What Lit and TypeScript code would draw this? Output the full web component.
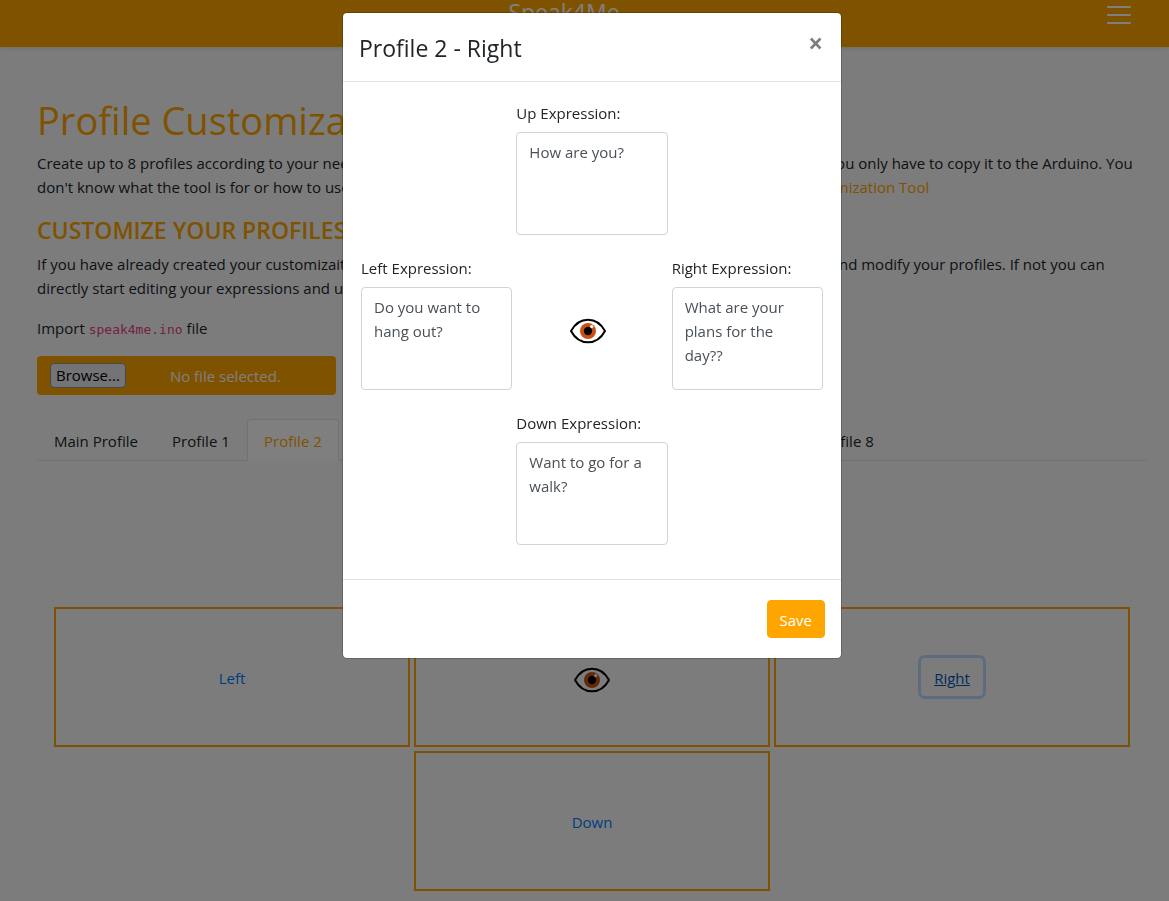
import { LitElement, html, css, svg } from "lit";
import { customElement, property, state, query } from "lit/decorators.js";
import { classMap } from "lit/directives/class-map.js";

type Direction = "Up" | "Left" | "Right" | "Down";

@customElement("eye-icon")
export class EyeIcon extends LitElement {
  static styles = css`
    :host {
      display: block;
      width: 36px;
      height: 26px;
    }
    svg {
      display: block;
    }
  `;

  render() {
    return html`<svg width="36" height="26" viewBox="0 0 36 26" aria-hidden="true">
      ${svg`
        <path d="M1 13C4.500 6.500 10.500 1.700 18 1.700S31.500 6.500 35 13C31.500 19.500 25.500 24.300 18 24.300S4.500 19.500 1 13Z"
          fill="none" stroke="#000" stroke-width="2" stroke-linejoin="round" />
        <circle cx="18" cy="13" r="8" fill="#ca5010" />
        <circle cx="18" cy="13" r="4.200" fill="#000" />
        <circle cx="21.700" cy="8.600" r="1.600" fill="#fff" />`}
    </svg>`;
  }
}

@customElement("expression-field")
export class ExpressionField extends LitElement {
  @property() label = "";
  @property() value = "";

  static styles = css`
    :host {
      display: block;
    }
    .caption {
      display: block;
      margin-bottom: 7px;
      line-height: 24px;
      color: #212529;
      white-space: nowrap;
    }
    .box {
      display: block;
      box-sizing: border-box;
      width: 100%;
      height: 103px;
      margin: 0;
      padding: 7px 12px 5px;
      border: 1px solid #ced4da;
      border-radius: 4px;
      background: #fff;
      color: #495057;
      font: inherit;
      line-height: 24px;
      resize: none;
    }
  `;

  render() {
    return html`
      <label class="caption" for="box">${this.label}</label>
      <textarea class="box" id="box" .value=${this.value}></textarea>
    `;
  }
}

@customElement("app-root")
export class AppRoot extends LitElement {
  @state() private tab = 2;
  @state() private editing: Direction | null = "Right";
  @query("#import") private fileInput!: HTMLInputElement;

  private tabs = ["Main Profile", ...Array.from({ length: 8 }, (_, i) => `Profile ${i + 1}`)];

  private expressions: Record<Direction, string> = {
    Up: "How are you?",
    Left: "Do you want to hang out?",
    Right: "What are your plans for the day??",
    Down: "Want to go for a walk?",
  };

  static styles = css`
    :host {
      display: block;
      min-height: 100vh;
      background: #f9f9f9;
      color: #212529;
      font-family: "Open Sans", "Noto Sans", sans-serif;
      font-size: 15px;
      line-height: 24px;
    }
    .navbar {
      display: flex;
      align-items: flex-start;
      padding: 0 22px 17px 37px;
      background: #ffa500;
      box-shadow: 0 2px 4px rgba(0, 0, 0, 0.1);
    }
    .brand {
      flex: 1;
      text-align: center;
      font-size: 23px;
      color: #fff;
      text-decoration: none;
    }
    .toggler {
      padding: 0 12px;
      border: 1px solid transparent;
      border-width: 0 1px;
      background: none;
      line-height: 0;
    }
    .content {
      padding: 49px 22px 10px 37px;
    }
    h1,
    h2,
    p {
      margin: 0;
    }
    h1 {
      margin-bottom: 7px;
      font-size: 38px;
      font-weight: 400;
      line-height: 48px;
      color: #ffa500;
    }
    h2 {
      margin-bottom: 7px;
      font-size: 23px;
      font-weight: 600;
      line-height: 30px;
      color: #ffa500;
      text-transform: uppercase;
    }
    .text {
      margin-bottom: 16px;
    }
    .text.last {
      margin-bottom: 14px;
    }
    .text a {
      color: #ffa500;
      text-decoration: none;
    }
    code {
      font-family: "DejaVu Sans Mono", monospace;
      font-size: 13px;
      color: #e83e8c;
    }
    .file {
      display: flex;
      align-items: center;
      gap: 44px;
      box-sizing: border-box;
      width: 299px;
      height: 39px;
      margin-bottom: 24px;
      padding: 0 13px;
      border-radius: 4px;
      background: #ffa500;
      color: #fff;
    }
    .browse {
      padding: 0 5px;
      border: 1px solid #8f8f9d;
      border-radius: 4px;
      background: #e9e9ed;
      color: #000;
      font: inherit;
      line-height: 23px;
    }
    .tabs {
      display: flex;
      border-bottom: 1px solid #dee2e6;
    }
    .tab {
      min-width: 92px;
      margin-bottom: -1px;
      padding: 9px 16px 7px;
      border: 1px solid transparent;
      border-radius: 4px 4px 0 0;
      background: none;
      color: #212529;
      font: inherit;
    }
    .tab.active {
      border-color: #dee2e6 #dee2e6 #fff;
      background: #fff;
      color: #ffa500;
    }
    .pad {
      display: grid;
      grid-template-columns: repeat(3, 1fr);
      grid-auto-rows: 140px;
      grid-template-areas: ". up ." "left eye right" ". down .";
      gap: 4px;
      padding: 2px 17px 0;
    }
    .cell {
      display: grid;
      place-items: center;
      border: 2px solid #ffa500;
    }
    .pad .eye {
      padding-top: 6px;
    }
    .up {
      grid-area: up;
    }
    .left {
      grid-area: left;
    }
    .right {
      grid-area: right;
    }
    .down {
      grid-area: down;
    }
    .eye {
      grid-area: eye;
    }
    .link {
      padding: 7px 12px 5px;
      border: 1px solid transparent;
      border-radius: 4px;
      background: none;
      color: #007bff;
      font: inherit;
    }
    .link.focused {
      color: #0056b3;
      text-decoration: underline;
      box-shadow: 0 0 0 3px rgba(0, 123, 255, 0.25);
    }
    .backdrop {
      position: fixed;
      inset: 0;
      display: grid;
      align-items: start;
      justify-items: center;
      padding: 12px 0 12px 15px;
      background: rgba(0, 0, 0, 0.5);
    }
    .modal {
      box-sizing: border-box;
      width: 100%;
      max-width: 500px;
      border: 1px solid rgba(0, 0, 0, 0.2);
      border-radius: 5px;
      background: #fff;
      background-clip: padding-box;
    }
    .modal-head {
      display: flex;
      align-items: flex-start;
      justify-content: space-between;
      padding: 17px 16px 15px;
      border-bottom: 1px solid #dee2e6;
    }
    .modal-head h3 {
      margin: 0;
      font-size: 23px;
      font-weight: 400;
      line-height: 36px;
    }
    .close {
      padding: 0 2px;
      border: 0;
      background: none;
      color: #000;
      font: 700 26px/26px "Open Sans", sans-serif;
      opacity: 0.5;
    }
    .modal-body {
      display: grid;
      grid-template-columns: repeat(3, 1fr);
      grid-template-areas: ". up ." "left eye right" ". down .";
      column-gap: 4px;
      row-gap: 21px;
      padding: 19px 18px 34px;
    }
    .modal-body .eye {
      display: grid;
      place-items: center;
      padding: 16px 8px 0 0;
    }
    .modal-foot {
      display: flex;
      justify-content: flex-end;
      padding: 20px 16px;
      border-top: 1px solid #dee2e6;
    }
    .save {
      padding: 7px 12px 5px;
      border: 1px solid #ffa500;
      border-radius: 4px;
      background: #ffa500;
      color: #fff;
      font: inherit;
    }
  `;

  private padCell(dir: Direction) {
    return html`<div class="cell ${dir.toLowerCase()}">
      <button
        class=${classMap({ link: true, focused: this.editing === dir })}
        @click=${() => (this.editing = dir)}
      >${dir}</button>
    </div>`;
  }

  private field(dir: Direction) {
    return html`<expression-field
      class=${dir.toLowerCase()}
      label="${dir} Expression:"
      .value=${this.expressions[dir]}
    ></expression-field>`;
  }

  private modal() {
    const close = () => (this.editing = null);
    return html`<div class="backdrop">
      <div class="modal" role="dialog" aria-modal="true" aria-labelledby="modal-title">
        <div class="modal-head">
          <h3 id="modal-title">${this.tabs[this.tab]} - ${this.editing}</h3>
          <button class="close" aria-label="Close" @click=${close}>×</button>
        </div>
        <div class="modal-body">
          ${this.field("Up")} ${this.field("Left")}
          <div class="eye"><eye-icon></eye-icon></div>
          ${this.field("Right")} ${this.field("Down")}
        </div>
        <div class="modal-foot">
          <button class="save" @click=${close}>Save</button>
        </div>
      </div>
    </div>`;
  }

  render() {
    return html`
      <nav class="navbar">
        <a class="brand" href="#">Speak4Me</a>
        <button class="toggler" aria-label="Toggle navigation">
          <svg width="30" height="30" viewBox="0 0 30 30" aria-hidden="true">
            <path d="M4 7h22M4 15h22M4 23h22" stroke="#fff" stroke-width="2" stroke-linecap="round" />
          </svg>
        </button>
      </nav>
      <main class="content">
        <h1>Profile Customization</h1>
        <p class="text">
          Create up to 8 profiles according to your needs. When you finish, download the customized Arduino file and
          then you only have to copy it to the Arduino. You don't know what the tool is for or how to use it? You can
          find all of the main steps in the guide for the <a href="#">Profile Customization Tool</a>
        </p>
        <h2>Customize your profiles</h2>
        <p class="text">
          If you have already created your customizaition file before, you can import it in this section via the
          Browse button and modify your profiles. If not you can directly start editing your expressions and use them.
        </p>
        <p class="text last">
          <label for="import">Import <code>speak4me.ino</code> file</label>
        </p>
        <div class="file">
          <input id="import" type="file" accept=".ino" hidden />
          <button class="browse" @click=${() => this.fileInput.click()}>Browse...</button>
          <span>No file selected.</span>
        </div>
        <div class="tabs" role="tablist">
          ${this.tabs.map(
            (name, i) => html`<button
              role="tab"
              aria-selected=${i === this.tab}
              class=${classMap({ tab: true, active: i === this.tab })}
              @click=${() => (this.tab = i)}
            >${name}</button>`
          )}
        </div>
        <div class="pad">
          ${this.padCell("Up")} ${this.padCell("Left")}
          <div class="cell eye"><eye-icon></eye-icon></div>
          ${this.padCell("Right")} ${this.padCell("Down")}
        </div>
      </main>
      ${this.editing ? this.modal() : null}
    `;
  }
}
